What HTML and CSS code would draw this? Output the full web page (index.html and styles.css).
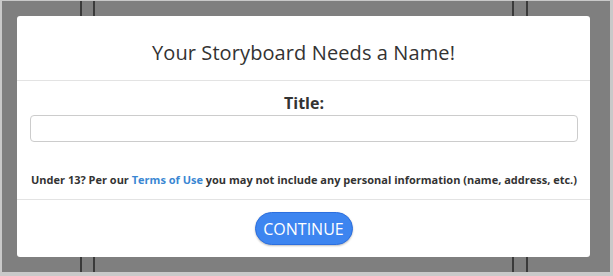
FILE: index.html
```html
<!DOCTYPE html>
<html lang="en">
  <head>
    <meta charset="UTF-8" />
    <meta name="viewport" content="width=device-width, initial-scale=1" />
    <title>Name Your Storyboard</title>
    <link rel="stylesheet" href="styles.css">
  </head>
  <body>
    <div class="backdrop">
      <span class="rail rail-a"></span>
      <span class="rail rail-b"></span>
      <span class="rail rail-c"></span>
      <span class="rail rail-d"></span>

      <div class="modal">
        <div class="modal-header">
          <h2>Your Storyboard Needs a Name!</h2>
        </div>

        <div class="modal-body">
          <label for="title" class="title-label">Title:</label>
          <input type="text" id="title" name="title" class="title-input" />
          <p class="notice">
            Under 13? Per our <a href="#">Terms of Use</a> you may not include
            any personal information (name, address, etc.)
          </p>
        </div>

        <div class="modal-footer">
          <button type="button" class="continue-btn">CONTINUE</button>
        </div>
      </div>
    </div>
  </body>
</html>
```

FILE: styles.css
```css
/* Reset and base */
* {
  margin: 0;
  padding: 0;
  box-sizing: border-box;
}

body {
  font-family: "Open Sans", "Liberation Sans", sans-serif;
  width: 613px;
  height: 276px;
  overflow: hidden;
}

.backdrop {
  position: relative;
  width: 613px;
  height: 276px;
  background: #7f7f7f;
  border-style: solid;
  border-color: #c9c9c9;
  border-width: 1px 3px 4px 2px;
  padding: 15px 0 0 15px;
}

/* page content peeking out behind the overlay */
.rail {
  position: absolute;
  top: 0;
  bottom: 0;
  width: 2px;
  background: #3a3a3a;
}

.rail-a { left: 78px; }
.rail-b { left: 91px; }
.rail-c { left: 510px; }
.rail-d { left: 524px; }

.modal {
  position: relative;
  width: 573px;
  height: 241px;
  background: #fff;
  border-radius: 3px;
  display: flex;
  flex-direction: column;
}

.modal-header {
  height: 65px;
  border-bottom: 1px solid #e3e3e3;
  display: flex;
  align-items: center;
  justify-content: center;
  padding-top: 9px;
}

.modal-header h2 {
  font-size: 20px;
  font-weight: 400;
  color: #333;
  letter-spacing: 0.1px;
}

.modal-body {
  height: 119px;
  border-bottom: 1px solid #e3e3e3;
  padding: 11px 12px 0 13px;
  display: flex;
  flex-direction: column;
  align-items: center;
}

.title-label {
  font-size: 16px;
  font-weight: 700;
  color: #333;
  line-height: 22px;
}

.title-input {
  width: 100%;
  height: 27px;
  margin-top: 1px;
  border: 1px solid #ccc;
  border-radius: 4px;
  outline: none;
}

.notice {
  margin-top: 30px;
  font-size: 11px;
  font-weight: 700;
  color: #333;
  line-height: 15px;
  white-space: nowrap;
}

.notice a {
  color: #3a87d3;
  text-decoration: none;
}

.modal-footer {
  flex: 1;
  display: flex;
  justify-content: center;
  padding-top: 12px;
}

.continue-btn {
  width: 98px;
  height: 33px;
  background: #3d85f0;
  border: 1px solid #2c6fdf;
  border-radius: 17px;
  color: #fff;
  font-family: inherit;
  font-size: 16px;
  font-weight: 400;
  box-shadow: 0 1px 2px rgba(0, 0, 0, 0.25);
}
```
